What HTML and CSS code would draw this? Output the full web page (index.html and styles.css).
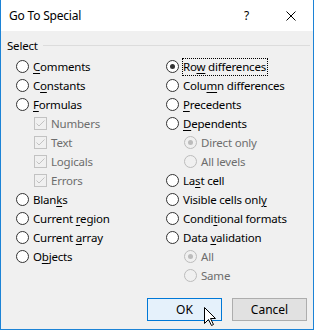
FILE: index.html
```html
<!DOCTYPE html>
<html lang="en">
<head>
    <meta charset="UTF-8">
    <title>Go To Special</title>
    <link rel="stylesheet" href="styles.css">
</head>
<body>
    <div class="dialog">
        <!-- Title bar -->
        <div class="titlebar">
            <span class="title">Go To Special</span>
            <span class="help">?</span>
            <svg class="close" width="10" height="10" viewBox="0 0 10 10">
                <path d="M0.5 0.5 L9.5 9.5 M9.5 0.5 L0.5 9.5" stroke="#000" stroke-width="1" fill="none"/>
            </svg>
        </div>

        <div class="content">
            <div class="group-head">
                <span class="group-label">Select</span>
                <span class="group-line"></span>
            </div>

            <div class="columns">
                <div class="col">
                    <div class="opt"><span class="radio"></span><span class="lbl"><u>C</u>omments</span></div>
                    <div class="opt"><span class="radio"></span><span class="lbl">C<u>o</u>nstants</span></div>
                    <div class="opt"><span class="radio"></span><span class="lbl"><u>F</u>ormulas</span></div>
                    <div class="opt sub off"><span class="check"><svg width="11" height="11" viewBox="0 0 11 11"><path d="M1.5 5.5 L4 8 L9.5 2.5" stroke="#c2c2c2" stroke-width="1" fill="none"/></svg></span><span class="lbl">Numbers</span></div>
                    <div class="opt sub off"><span class="check"><svg width="11" height="11" viewBox="0 0 11 11"><path d="M1.5 5.5 L4 8 L9.5 2.5" stroke="#c2c2c2" stroke-width="1" fill="none"/></svg></span><span class="lbl">Text</span></div>
                    <div class="opt sub off"><span class="check"><svg width="11" height="11" viewBox="0 0 11 11"><path d="M1.5 5.5 L4 8 L9.5 2.5" stroke="#c2c2c2" stroke-width="1" fill="none"/></svg></span><span class="lbl">Logicals</span></div>
                    <div class="opt sub off"><span class="check"><svg width="11" height="11" viewBox="0 0 11 11"><path d="M1.5 5.5 L4 8 L9.5 2.5" stroke="#c2c2c2" stroke-width="1" fill="none"/></svg></span><span class="lbl">Errors</span></div>
                    <div class="opt"><span class="radio"></span><span class="lbl">Blan<u>k</u>s</span></div>
                    <div class="opt"><span class="radio"></span><span class="lbl">Current <u>r</u>egion</span></div>
                    <div class="opt"><span class="radio"></span><span class="lbl">Current <u>a</u>rray</span></div>
                    <div class="opt"><span class="radio"></span><span class="lbl">O<u>b</u>jects</span></div>
                </div>
                <div class="col">
                    <div class="opt"><span class="radio on"></span><span class="lbl focus">Ro<u>w</u> differences</span></div>
                    <div class="opt"><span class="radio"></span><span class="lbl">Colu<u>m</u>n differences</span></div>
                    <div class="opt"><span class="radio"></span><span class="lbl"><u>P</u>recedents</span></div>
                    <div class="opt"><span class="radio"></span><span class="lbl"><u>D</u>ependents</span></div>
                    <div class="opt sub off"><span class="radio on"></span><span class="lbl">Direct only</span></div>
                    <div class="opt sub off"><span class="radio"></span><span class="lbl">All levels</span></div>
                    <div class="opt"><span class="radio"></span><span class="lbl">La<u>s</u>t cell</span></div>
                    <div class="opt"><span class="radio"></span><span class="lbl">Visible cells onl<u>y</u></span></div>
                    <div class="opt"><span class="radio"></span><span class="lbl">Condi<u>t</u>ional formats</span></div>
                    <div class="opt"><span class="radio"></span><span class="lbl">Data <u>v</u>alidation</span></div>
                    <div class="opt sub off"><span class="radio on"></span><span class="lbl">All</span></div>
                    <div class="opt sub off"><span class="radio"></span><span class="lbl">Same</span></div>
                </div>
            </div>

            <div class="buttons">
                <button class="btn default">OK</button>
                <button class="btn">Cancel</button>
            </div>
        </div>

        <!-- mouse pointer over the OK button -->
        <svg class="cursor" width="13" height="20" viewBox="0 0 13 20">
            <path d="M0.5 0.5 L0.5 16.5 L4.5 12.5 L7.5 18.5 L9.5 17.5 L6.5 11.5 L11.5 11.5 Z" fill="#fff" stroke="#000" stroke-width="1"/>
        </svg>
    </div>
</body>
</html>
```

FILE: styles.css
```css
* {
    box-sizing: border-box;
}

body {
    margin: 0;
    font-family: "Noto Sans", "Open Sans", sans-serif;
    font-size: 11.5px;
    letter-spacing: -0.2px;
    color: #000;
}

.dialog {
    position: relative;
    width: 314px;
    height: 330px;
    background-color: #f0f0f0;
    border: 1px solid #1c83d6;
    border-top: none;
}

.titlebar {
    display: flex;
    align-items: center;
    height: 31px;
    background-color: #fff;
    padding-left: 8px;
}

.title {
    flex: 1;
    font-size: 12px;
}

.help {
    margin-right: 37px;
    font-size: 12px;
}

.close {
    margin-right: 17px;
}

.content {
    padding: 5px 0 0 0;
}

.group-head {
    display: flex;
    align-items: center;
    height: 18px;
    padding-left: 6px;
}

.group-label {
    margin-right: 5px;
}

.group-line {
    flex: 1;
    height: 1px;
    background-color: #dcdcdc;
    margin-right: 3px;
}

.columns {
    display: grid;
    grid-template-columns: 150px 1fr;
    padding-left: 15px;
    margin-top: 3px;
}

.opt {
    display: flex;
    align-items: center;
    height: 19px;
    white-space: nowrap;
}

.lbl {
    white-space: pre;
}

.opt u {
    text-decoration-thickness: 1px;
    text-underline-offset: 2px;
}

.sub {
    padding-left: 18px;
}

.off {
    color: #6d6d6d;
}

.radio {
    position: relative;
    width: 13px;
    height: 13px;
    border: 1px solid #333;
    border-radius: 50%;
    background-color: #fff;
    margin-right: 4px;
    flex-shrink: 0;
}

.radio.on::after {
    content: "";
    position: absolute;
    left: 3px;
    top: 3px;
    width: 5px;
    height: 5px;
    border-radius: 50%;
    background-color: #333;
}

.off .radio {
    border-color: #bcbcbc;
    background-color: #f0f0f0;
}

.off .radio.on::after {
    background-color: #bcbcbc;
}

.check {
    display: flex;
    align-items: center;
    justify-content: center;
    width: 13px;
    height: 13px;
    border: 1px solid #c2c2c2;
    background-color: #f0f0f0;
    margin-right: 4px;
}

.focus {
    outline: 1px dotted #000;
    outline-offset: 0;
    padding: 0 1px 1px 0;
    line-height: 15px;
}

.buttons {
    display: flex;
    justify-content: flex-end;
    gap: 10px;
    margin-top: 13px;
    padding-right: 6px;
}

.btn {
    width: 75px;
    height: 23px;
    font-family: inherit;
    font-size: 12px;
    color: #000;
    background-color: #e1e1e1;
    border: 1px solid #adadad;
    padding: 0;
}

.btn.default {
    background-color: #e5f1fb;
    border-color: #0078d7;
}

.cursor {
    position: absolute;
    left: 203px;
    top: 307px;
}
```
